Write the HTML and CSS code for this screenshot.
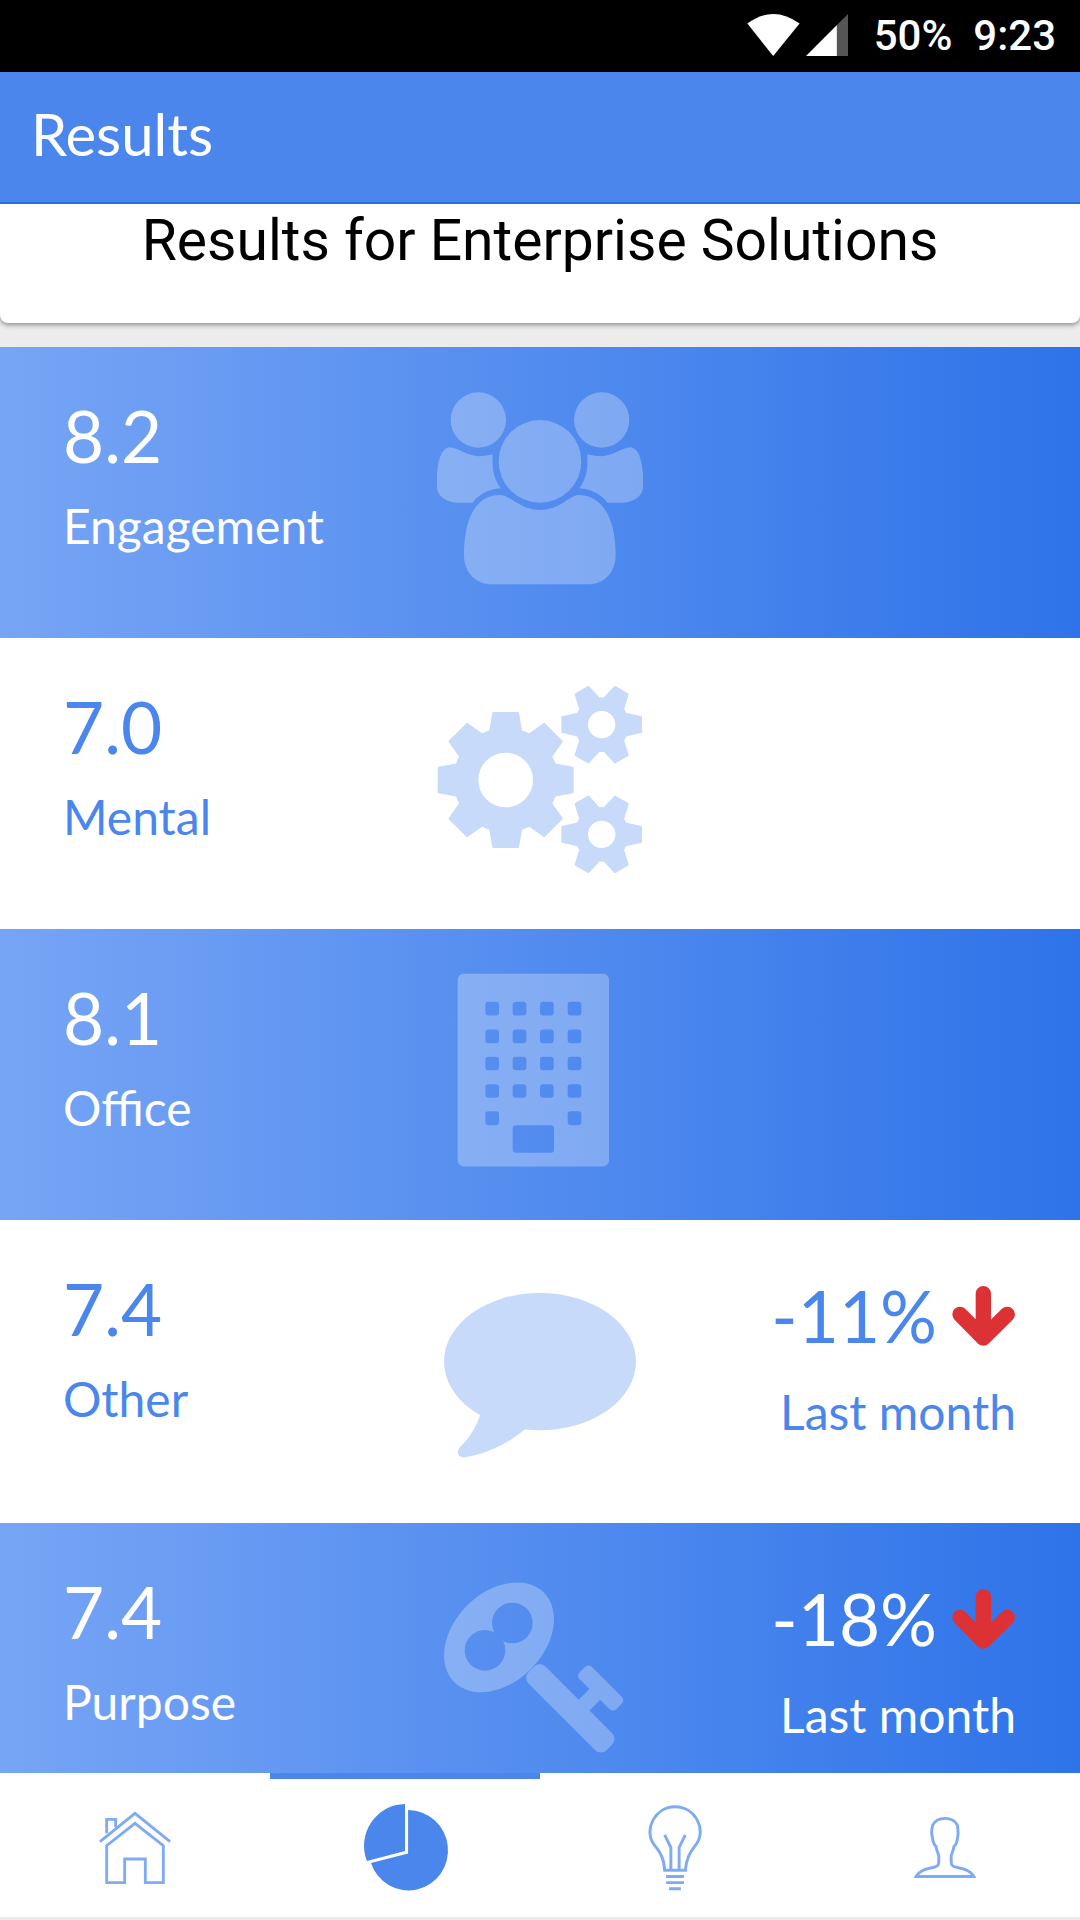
FILE: index.html
```html
<!DOCTYPE html>
<html lang="en">
<head>
<meta charset="utf-8">
<title>Results</title>
<link rel="stylesheet" href="styles.css">
</head>
<body>
<div class="screen">
  <header class="status">
    <svg class="status-wifi" viewBox="142 43 158 127"><path d="M142 72Q220 14 300 72L220 170Z"/></svg>
    <svg class="status-signal" viewBox="318 45 125 125"><path d="M318 170L410 78V170Z"/><path class="dim" d="M410 78L443 45V170H410Z"/></svg>
    <span class="status-text">50%</span>
    <span class="status-text">9:23</span>
  </header>
  <div class="appbar">Results</div>
  <div class="card">Results for Enterprise Solutions</div>
  <main class="rows">
    <section class="row row-blue r1">
      <div class="stat"><div class="num">8.2</div><div class="label">Engagement</div></div>
      <svg class="art art-light" viewBox="111 -69 618 873">
        <circle cx="235" cy="150" r="83"/><circle cx="605" cy="150" r="83"/><circle cx="420" cy="274" r="124"/>
        <path d="M150 232C125 232 110 270 110 345C110 380 140 398 175 398L218 398C235 375 262 358 302 355C285 330 275 305 278 253C262 257 250 259 235 259C205 259 170 232 150 232Z"/>
        <path d="M690 232C715 232 730 270 730 345C730 380 700 398 665 398L622 398C605 375 578 358 538 355C555 330 565 305 562 253C578 257 590 259 605 259C635 259 670 232 690 232Z"/>
        <path d="M300 375C225 375 192 450 192 555C192 610 230 643 275 643L565 643C610 643 647 610 647 555C647 450 610 375 535 375C510 375 480 420 420 420C360 420 330 375 300 375Z"/>
      </svg>
    </section>
    <section class="row row-white r2">
      <div class="stat"><div class="num">7.0</div><div class="label">Mental</div></div>
      <svg class="art art-pale" viewBox="111 804 618 873">
        <defs>
          <path id="tooth-l" d="M145 -47L201 -37V37L145 47Z"/>
          <path id="tooth-s" d="M75 -32L118 -22V22L75 32Z"/>
          <g id="gear-s">
            <circle r="82"/>
            <use href="#tooth-s"/><use href="#tooth-s" transform="rotate(60)"/><use href="#tooth-s" transform="rotate(120)"/>
            <use href="#tooth-s" transform="rotate(180)"/><use href="#tooth-s" transform="rotate(240)"/><use href="#tooth-s" transform="rotate(300)"/>
            <circle class="hole" r="41"/>
          </g>
        </defs>
        <g transform="translate(317 1230)">
          <circle r="157"/>
          <use href="#tooth-l"/><use href="#tooth-l" transform="rotate(45)"/><use href="#tooth-l" transform="rotate(90)"/><use href="#tooth-l" transform="rotate(135)"/>
          <use href="#tooth-l" transform="rotate(180)"/><use href="#tooth-l" transform="rotate(225)"/><use href="#tooth-l" transform="rotate(270)"/><use href="#tooth-l" transform="rotate(315)"/>
          <circle class="hole" r="82"/>
        </g>
        <use href="#gear-s" transform="translate(605 1064)"/>
        <use href="#gear-s" transform="translate(605 1393)"/>
      </svg>
    </section>
    <section class="row row-blue r3">
      <div class="stat"><div class="num">8.1</div><div class="label">Office</div></div>
      <svg class="art art-light" viewBox="111 -62 618 860.5" preserveAspectRatio="none">
        <mask id="office-mask" maskUnits="userSpaceOnUse" x="160" y="60" width="480" height="590">
          <rect class="m-on" x="173" y="70" width="454" height="570" rx="18"/>
          <g class="m-off">
            <rect x="256" y="153" width="41" height="41" rx="9"/><rect x="338" y="153" width="41" height="41" rx="9"/><rect x="420" y="153" width="41" height="41" rx="9"/><rect x="503" y="153" width="41" height="41" rx="9"/>
            <rect x="256" y="235" width="41" height="41" rx="9"/><rect x="338" y="235" width="41" height="41" rx="9"/><rect x="420" y="235" width="41" height="41" rx="9"/><rect x="503" y="235" width="41" height="41" rx="9"/>
            <rect x="256" y="316" width="41" height="40" rx="9"/><rect x="338" y="316" width="41" height="40" rx="9"/><rect x="420" y="316" width="41" height="40" rx="9"/><rect x="503" y="316" width="41" height="40" rx="9"/>
            <rect x="256" y="397" width="41" height="40" rx="9"/><rect x="338" y="397" width="41" height="40" rx="9"/><rect x="420" y="397" width="41" height="40" rx="9"/><rect x="503" y="397" width="41" height="40" rx="9"/>
            <rect x="256" y="477" width="41" height="41" rx="9"/><rect x="503" y="477" width="41" height="41" rx="9"/>
            <rect x="338" y="518" width="124" height="82" rx="9"/>
          </g>
        </mask>
        <rect x="160" y="60" width="480" height="590" mask="url(#office-mask)"/>
      </svg>
    </section>
    <section class="row row-white r4">
      <div class="stat"><div class="num">7.4</div><div class="label">Other</div></div>
      <svg class="art art-pale" viewBox="111 798.4 618 896" preserveAspectRatio="none">
        <ellipse cx="420" cy="1217" rx="288" ry="203"/>
        <path d="M240 1375C225 1420 205 1445 180 1470C165 1490 178 1503 195 1500C270 1487 330 1455 375 1417L300 1350Z"/>
      </svg>
      <div class="delta">
        <div class="delta-top"><span class="num">-11%</span>
          <svg class="arrow" viewBox="637 78 189 180"><path d="M731 101V234M661 163L731 234L803 163"/></svg>
        </div>
        <div class="label">Last month</div>
      </div>
    </section>
    <section class="row row-blue r5">
      <div class="stat"><div class="num">7.4</div><div class="label">Purpose</div></div>
      <svg class="art art-light" viewBox="21 -111 618 750">
        <mask id="key-mask" maskUnits="userSpaceOnUse" x="20" y="40" width="380" height="380">
          <ellipse class="m-on" cx="207" cy="232" rx="190" ry="135" transform="rotate(-45 207 232)"/>
          <g class="m-off"><circle cx="247" cy="189" r="61"/><circle cx="165" cy="271" r="61"/></g>
        </mask>
        <rect x="20" y="40" width="380" height="380" mask="url(#key-mask)"/>
        <rect x="0" y="-36" width="331" height="72" rx="24" transform="translate(304 328) rotate(45)"/>
        <rect x="-78" y="-26" width="156" height="52" rx="14" transform="translate(512 384) rotate(45)"/>
        <path class="key-neck" d="M455 443L500 398"/>
      </svg>
      <div class="delta">
        <div class="delta-top"><span class="num">-18%</span>
          <svg class="arrow" viewBox="637 78 189 180"><path d="M731 101V234M661 163L731 234L803 163"/></svg>
        </div>
        <div class="label">Last month</div>
      </div>
    </section>
  </main>
  <nav class="nav">
    <div class="tab">
      <svg class="tab-icon line" viewBox="75 -51 300 432">
        <path d="M120 155L225 70L330 155"/>
        <path d="M140 130V88H167V112"/>
        <path d="M140 278V167L225 100L310 167V278H256V207H194V278Z"/>
      </svg>
    </div>
    <div class="tab tab-active">
      <svg class="tab-icon pie" viewBox="1030.5 48 291 419">
        <path d="M1185 156A115 117 0 1 1 1077 310L1185 282Z"/>
        <path d="M1176 138A122 122 0 0 0 1065 304L1176 275Z"/>
      </svg>
    </div>
    <div class="tab">
      <svg class="tab-icon line" viewBox="246.5 48 291 419">
        <path d="M362 332C360 290 345 275 330 255C300 212 335 146 392 146C450 146 485 212 454 255C440 275 425 290 422 332"/>
        <path d="M358 331H427"/>
        <path d="M362 228L380 265V331M422 228L404 265V331"/>
        <path d="M366 349H418M366 367H418M375 385H409"/>
      </svg>
    </div>
    <div class="tab">
      <svg class="tab-icon line" viewBox="1030.5 48 291 419">
        <path d="M1092 349H1260C1250 330 1225 325 1212 323C1200 320 1194 318 1194 308V290C1196 280 1200 275 1202 262C1208 258 1212 245 1212 238C1216 225 1214 212 1212 200C1205 185 1190 180 1176 180C1160 180 1147 185 1140 200C1137 212 1136 225 1140 238C1140 245 1144 258 1150 262C1152 275 1156 280 1158 290V308C1158 318 1152 320 1140 323C1127 325 1102 330 1092 349Z"/>
      </svg>
    </div>
  </nav>
</div>
</body>
</html>
```

FILE: styles.css
```css
* { box-sizing: border-box; }
html, body { margin: 0; padding: 0; }
body { background: #dcdcdc; font-family: "Lato", sans-serif; }
.screen { width: 1080px; height: 1920px; display: flex; flex-direction: column; overflow: hidden; background: #ececec; }

.status { height: 72px; background: #000; display: flex; align-items: center; justify-content: flex-end; padding-right: 24px; flex: none; }
.status-wifi { width: 53px; height: 42px; fill: #fff; margin-right: 6px; margin-top: -2px; }
.status-signal { width: 42px; height: 42px; fill: #fff; margin-right: 26px; margin-top: -2px; }
.status-signal .dim { fill: #555; }
.status-text { font-family: "Roboto", sans-serif; font-weight: 500; font-size: 42px; line-height: 72px; color: #fff; margin-left: 21px; }
.status-text:first-of-type { margin-left: 0; }

.appbar { height: 132px; flex: none; background: #4a86ec; border-bottom: 2px solid #2f73e8; color: #fff; font-size: 58px; line-height: 124px; padding-left: 31px; }

.card { height: 119px; flex: none; background: #fff; border-radius: 0 0 8px 8px; box-shadow: 0 2px 5px rgba(0, 0, 0, .4); font-family: "Roboto", sans-serif; font-size: 57px; line-height: 74px; text-align: center; color: #000; margin-bottom: 24px; position: relative; }

.rows { flex: none; display: flex; flex-direction: column; }
.row { display: grid; grid-template-columns: 374px 206px 1fr; padding-left: 63px; padding-right: 64px; }
.r1, .r2, .r3 { height: 291px; }
.r4 { height: 303px; }
.r5 { height: 250px; }
.row-blue { background: linear-gradient(90deg, #77a5f5, #2e73e9); color: #fff; }
.row-white { background: #fff; color: #4a86ec; }

.stat { padding-top: 45px; }
.num { font-size: 71px; line-height: 88px; }
.label { font-size: 48px; line-height: 60px; margin-top: 16px; }

.art { display: block; width: 206px; height: 100%; }
.art-light { fill: #fff; opacity: .28; }
.art-pale { fill: #c8dafa; }
.hole { fill: #fff; }
.m-on { fill: #fff; }
.m-off { fill: #000; }
#tooth-l, #tooth-s { stroke: #c8dafa; stroke-width: 6; stroke-linejoin: round; }
.key-neck { fill: none; stroke: #fff; stroke-width: 46; }

.delta { padding-top: 52px; text-align: right; }
.delta-top { display: flex; justify-content: flex-end; align-items: center; gap: 15px; }
.arrow { width: 63px; height: 60px; margin-right: 1px; fill: none; stroke: #dc3236; stroke-width: 46; stroke-linecap: round; stroke-linejoin: round; }
.delta .label { margin-top: 22px; }

.nav { height: 144px; flex: none; background: #fff; display: grid; grid-template-columns: repeat(4, 1fr); }
.tab { position: relative; display: flex; justify-content: center; }
.tab-active::before { content: ""; position: absolute; left: 0; right: 0; top: 0; height: 6px; background: #4a86ec; }
.tab-icon { display: block; width: 100px; height: 144px; }
.line { fill: none; stroke: #7eabf2; stroke-width: 8.5; }
.pie { fill: #4a86ec; }
```
